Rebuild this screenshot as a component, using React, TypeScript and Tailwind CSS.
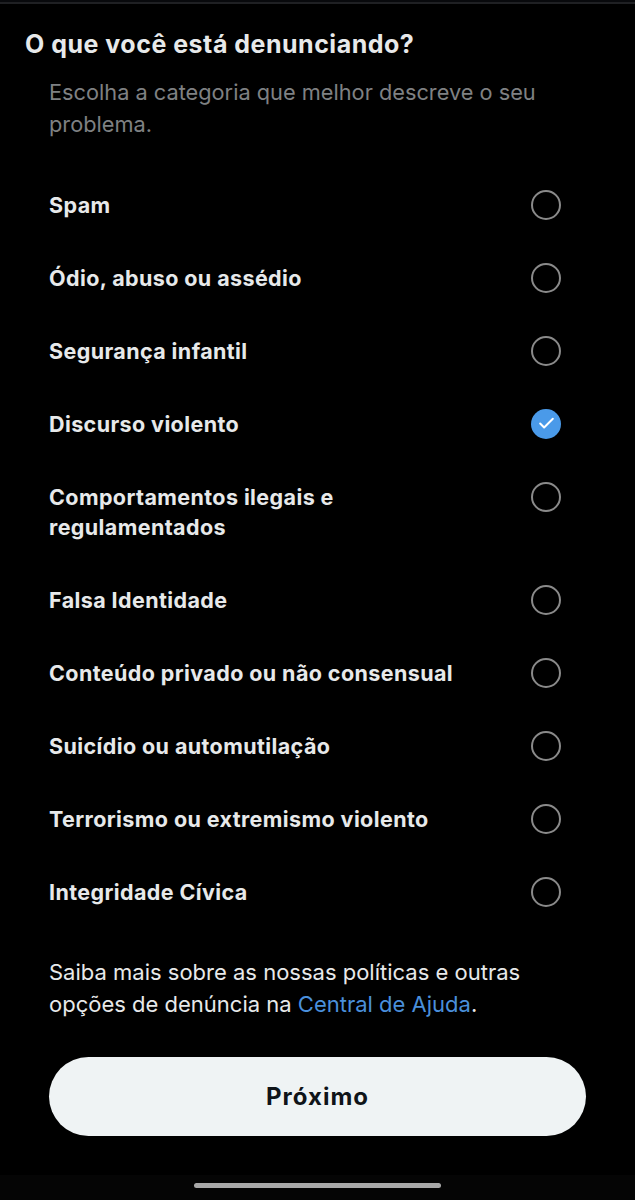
import { Check } from "lucide-react";

const options = [
  "Spam",
  "Ódio, abuso ou assédio",
  "Segurança infantil",
  "Discurso violento",
  "Comportamentos ilegais e regulamentados",
  "Falsa Identidade",
  "Conteúdo privado ou não consensual",
  "Suicídio ou automutilação",
  "Terrorismo ou extremismo violento",
  "Integridade Cívica",
];

const selected = "Discurso violento";

function Radio({ checked }: { checked: boolean }) {
  if (checked) {
    return (
      <span className="flex h-[30px] w-[30px] shrink-0 items-center justify-center rounded-full bg-[#4a9ae9]">
        <Check className="h-[19px] w-[19px] text-white" strokeWidth={2.5} />
      </span>
    );
  }
  return <span className="h-[30px] w-[30px] shrink-0 rounded-full border-[2.5px] border-[#8a8a8a]" />;
}

export default function App() {
  return (
    <div className="flex min-h-[1200px] w-[635px] flex-col bg-black font-['Inter',sans-serif] text-white">
      <div className="h-[2px] bg-[#08090c]" />
      <div className="h-[2px] bg-[#1f2023]" />

      <div className="px-[25px] pt-[25px]">
        <h1 className="text-[25px] font-bold leading-[30px] tracking-[0.5px] text-[#e7e9ea]">
          O que você está denunciando?
        </h1>
        <p className="mt-[17px] pl-[24px] pr-[30px] text-[21.75px] leading-[32px] text-[#7f8183]">
          Escolha a categoria que melhor descreve o seu problema.
        </p>
      </div>

      <ul className="mt-[28px] pl-[49px] pr-[74px]">
        {options.map((label) => (
          <li key={label} className="flex items-start justify-between gap-6 py-[21.5px]">
            <span className="text-[21.5px] font-bold leading-[30px] tracking-[0.4px] text-[#e7e9ea]">
              {label === "Comportamentos ilegais e regulamentados" ? (
                <>
                  Comportamentos ilegais e
                  <br />
                  regulamentados
                </>
              ) : (
                label
              )}
            </span>
            <Radio checked={label === selected} />
          </li>
        ))}
      </ul>

      <p className="mt-[28px] px-[49px] text-[22px] leading-[32px] text-[#e7e9ea]">
        Saiba mais sobre as nossas políticas e outras
        <br />
        opções de denúncia na <span className="text-[#4a8fdb]">Central de Ajuda</span>.
      </p>

      <div className="mt-[37px] px-[49px]">
        <button className="flex h-[79px] w-full items-center justify-center rounded-full bg-[#eff3f4] text-[24px] font-bold tracking-[1px] text-[#0f1419]">
          Próximo
        </button>
      </div>

      <div className="mt-auto flex justify-center bg-[#050505] pb-[12px] pt-[8px]">
        <div className="h-[5px] w-[247px] rounded-full bg-[#a8a8a8]" />
      </div>
    </div>
  );
}
